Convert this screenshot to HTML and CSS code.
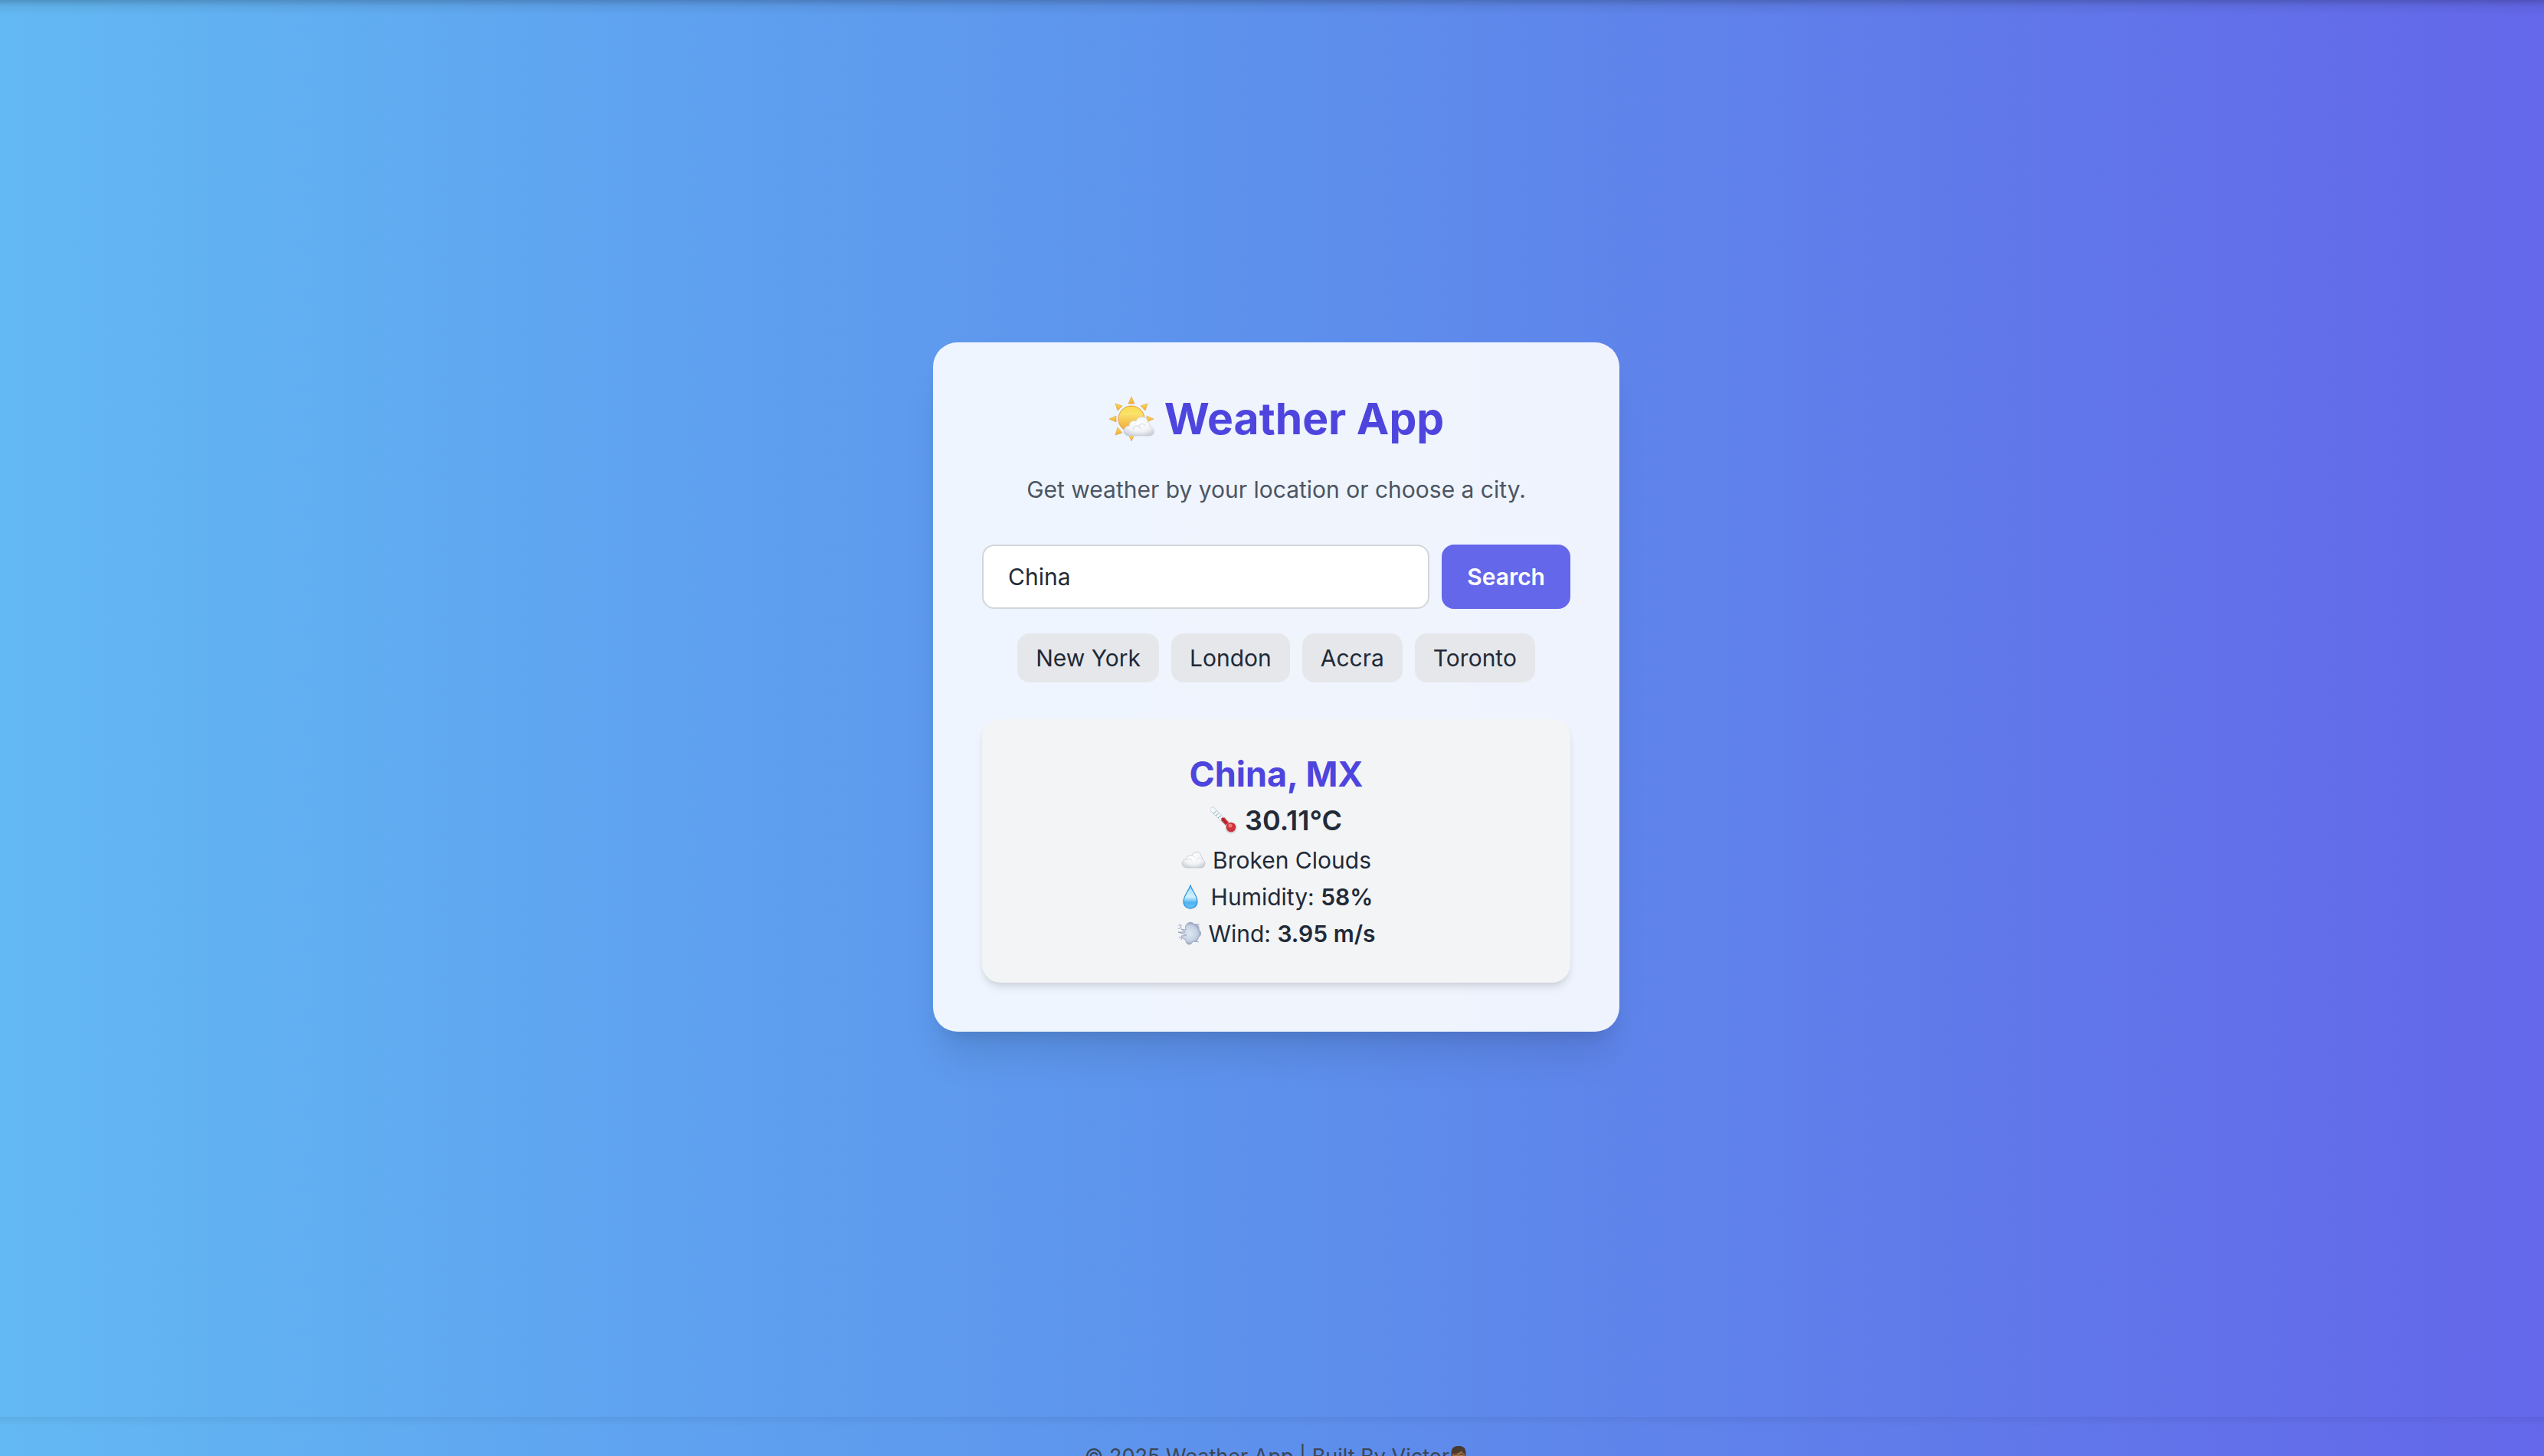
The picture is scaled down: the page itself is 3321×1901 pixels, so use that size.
FILE: index.html
```html
<!DOCTYPE html>
<html lang="en">
<head>
<meta charset="utf-8">
<meta name="viewport" content="width=device-width, initial-scale=1">
<title>Weather App</title>
<link rel="stylesheet" href="styles.css">
</head>
<body>
<main class="page">
  <section class="card">
    <h1 class="title">
      <svg class="title-icon" viewBox="0 0 60 60" aria-hidden="true">
        <defs>
          <linearGradient id="sun" x1="0" y1="0" x2="0" y2="1"><stop offset="0" stop-color="#fbd94b"/><stop offset=".3" stop-color="#fae36c"/><stop offset="1" stop-color="#f0a030"/></linearGradient>
          <linearGradient id="ray" x1="0" y1="0" x2="0" y2="1"><stop offset="0" stop-color="#f8df45"/><stop offset="1" stop-color="#f3a93c"/></linearGradient>
          <radialGradient id="puff" cx=".5" cy=".35" r=".7"><stop offset="0" stop-color="#ffffff"/><stop offset=".6" stop-color="#f1f3f6"/><stop offset="1" stop-color="#c9cfd8"/></radialGradient>
        </defs>
        <g fill="url(#ray)" stroke="#dd9a42" stroke-width=".6" stroke-linejoin="round">
          <path d="M30 1l4 9h-8z"/><path d="M51 10l-3 9-6-6z"/><path d="M59 30l-9 4v-8z"/><path d="M9 10l9 3-6 6z"/><path d="M1 30l9-4v8z"/><path d="M9 51l3-10 6 7z"/><path d="M30 59l-4-9h8z"/>
        </g>
        <circle cx="30" cy="30" r="17" fill="url(#sun)" stroke="#e49b38"/>
        <path d="M27 52c-10 0-9-13 0-13 0-6 6-8 9-6 2-8 15-8 16 2 2 1 3 3 2 5 8 2 7 12-1 12z" fill="url(#puff)" stroke="#c6ccd4" stroke-width=".7"/>
        <path d="M32 44c0-4 4-6 7-4 1-4 7-5 9-1M39 40c2 0 3 1 3 3" fill="none" stroke="#d8dce3" stroke-width="1.2"/>
      </svg>
      <span>Weather App</span>
    </h1>
    <p class="intro">Get weather by your location or choose a city.</p>
    <form class="search" onsubmit="return false">
      <input class="search-input" type="text" value="China" aria-label="City">
      <button class="search-button" type="submit">Search</button>
    </form>
    <div class="cities">
      <button class="city" type="button">New York</button>
      <button class="city" type="button">London</button>
      <button class="city" type="button">Accra</button>
      <button class="city" type="button">Toronto</button>
    </div>
    <article class="report">
      <h2 class="place">China, MX</h2>
      <p class="line temperature">
        <svg class="icon icon-large" viewBox="0 0 36 36" aria-hidden="true">
          <path d="M3 4L17 18" stroke="#c8d9df" stroke-width="7" stroke-linecap="round"/>
          <path d="M3 4L17 18" stroke="#f3fafb" stroke-width="5" stroke-linecap="round"/>
          <path d="M4 9l4-3M7 12l4-3M10 15l4-3" stroke="#919fa5" stroke-width="1"/>
          <path d="M16 16L26 27" stroke="#b9545b" stroke-width="6"/>
          <path d="M15 15L26 27" stroke="#b91c27" stroke-width="3"/>
          <circle cx="27" cy="28" r="7.5" fill="#cfdadf"/>
          <circle cx="27" cy="27" r="6.3" fill="#cf343c"/>
          <circle cx="26" cy="25" r="2.5" fill="#ef7b7b"/>
        </svg>
        <span>30.11°C</span>
      </p>
      <p class="line">
        <svg class="icon" viewBox="0 0 32 32" aria-hidden="true">
          <path d="M8 26C-1 26-1 15 7 15c0-5 5-6 7-5 2-7 12-6 12 1 2 1 2 3 1 4 6 1 5 11-1 11z" fill="url(#puff)" stroke="#c3c6ca" stroke-width=".8"/>
          <path d="M9 16c2-2 4-1 5 0M14 10c2 0 3 1 4 3M20 16c0-3 4-5 7-1" fill="none" stroke="#d9dbdf"/>
        </svg>
        <span>Broken Clouds</span>
      </p>
      <p class="line">
        <svg class="icon" viewBox="0 0 32 32" aria-hidden="true">
          <defs>
            <linearGradient id="drop" x1="0" y1="0" x2="0" y2="1"><stop offset="0" stop-color="#9bdcf8"/><stop offset=".5" stop-color="#d0f1fc"/><stop offset=".75" stop-color="#4eb1f1"/><stop offset="1" stop-color="#6bc9f5"/></linearGradient>
          </defs>
          <path d="M14 1c2 7 9 13 9 21 0 12-18 12-18 0C5 14 12 8 14 1z" fill="url(#drop)" stroke="#3593df" stroke-width="1.3"/>
        </svg>
        <span>Humidity: <strong>58%</strong></span>
      </p>
      <p class="line">
        <svg class="icon" viewBox="0 0 32 32" aria-hidden="true">
          <defs>
            <radialGradient id="gust"><stop offset="0" stop-color="#dfe8f4"/><stop offset=".7" stop-color="#c4d1e3"/><stop offset="1" stop-color="#98a6be"/></radialGradient>
          </defs>
          <path d="M12 11c-3-8 7-13 11-7 4-1 7 3 6 7 4 3 3 8-1 10 0 5-4 6-7 5-2 7-10 4-9-2-3 0-5-3-6-5l7-1-11-4 9 0-5-4z" fill="url(#gust)" stroke="#8996ad" stroke-width=".7"/>
          <path d="M2 9c3 1 4-1 4-3s-3-2-3 0M3 21c3-1 4 1 3 3M23 4h7M23 26l6 1" fill="none" stroke="#99a8bf" stroke-width="1.1"/>
        </svg>
        <span>Wind: <strong>3.95 m/s</strong></span>
      </p>
    </article>
  </section>
</main>
<footer class="footer">
  <span>© 2025 Weather App | Built By Victor</span>
  <svg class="person" viewBox="0 0 24 32" aria-hidden="true">
    <path d="M3 17C1 5 5 2 12 2s11 3 9 15z" fill="#49392f"/>
    <path d="M4 12c5 0 9-1 12-4 1 3 3 4 4 4v7c0 12-16 12-16 0z" fill="#99683f"/>
    <circle cx="3.500" cy="17" r="2" fill="#8b5b36"/><circle cx="20.500" cy="17" r="2" fill="#8b5b36"/>
    <ellipse cx="8.500" cy="16" rx="2" ry="1.500" fill="#eee"/><ellipse cx="15.500" cy="16" rx="2" ry="1.500" fill="#eee"/>
    <circle cx="8.500" cy="16" r="1.200" fill="#2c211c"/><circle cx="15.500" cy="16" r="1.200" fill="#2c211c"/>
    <path d="M6 13h4M14 13h4M9 23q3 2 6 0" stroke="#3c2a20" fill="none"/>
  </svg>
</footer>
</body>
</html>
```
FILE: styles.css
```css
* {
  box-sizing: border-box;
}

body {
  margin: 0;
  height: 100vh;
  overflow: hidden;
  color: #222a38;
  font: 30px/48px Inter, "Liberation Sans", sans-serif;
  background: linear-gradient(to right, #63b9f3, #5fa3f0 25%, #5d90ec 50%, #607bea 75%, #6467ea);
}

h1, h2, p {
  margin: 0;
}

.page {
  display: flex;
  align-items: center;
  justify-content: center;
  min-height: calc(100vh - 51px);
  padding: 0 0 56px 11px;
  background: linear-gradient(to bottom, rgba(0, 0, 0, 0.2), rgba(0, 0, 0, 0.06) 8px, transparent 20px);
}

.card {
  width: 100%;
  max-width: 896px;
  padding: 64px;
  border-radius: 32px;
  text-align: center;
  background: rgba(255, 255, 255, 0.9);
  box-shadow: 0 40px 50px -10px rgba(0, 0, 0, 0.1), 0 16px 20px -12px rgba(0, 0, 0, 0.1);
}

.title {
  display: flex;
  align-items: center;
  justify-content: center;
  gap: 13px;
  margin-bottom: 32px;
  color: #4d45dd;
  font-size: 57px;
  line-height: 72px;
  font-weight: 700;
}

.title-icon {
  width: 60px;
  height: 60px;
}

.intro {
  margin-bottom: 48px;
  color: #4c5562;
}

.search {
  display: flex;
  gap: 16px;
  margin-bottom: 32px;
}

.search-input,
.search-button,
.city {
  font: inherit;
  border-radius: 16px;
}

.search-input {
  flex: 1;
  min-width: 0;
  height: 84px;
  padding: 0 32px;
  border: 2px solid #d2d5da;
  color: inherit;
  background: #fff;
}

.search-button {
  padding: 0 33px;
  border: 0;
  color: #fff;
  font-weight: 600;
  background: #6467ea;
}

.cities {
  display: flex;
  flex-wrap: wrap;
  justify-content: center;
  gap: 16px;
  margin-bottom: 48px;
}

.city {
  padding: 8px 24px;
  border: 0;
  color: inherit;
  background: #e5e7ea;
}

.report {
  padding: 40px;
  border-radius: 24px;
  background: #f3f4f6;
  box-shadow: 0 8px 12px -2px rgba(0, 0, 0, 0.1), 0 4px 8px -4px rgba(0, 0, 0, 0.1);
}

.place {
  color: #4d45dd;
  font-size: 45px;
  line-height: 64px;
  font-weight: 700;
}

.line {
  display: flex;
  align-items: center;
  justify-content: center;
  gap: 9px;
}

.line strong {
  font-weight: 600;
}

.temperature {
  font-size: 36px;
  line-height: 56px;
  font-weight: 600;
}

.icon {
  width: 32px;
  height: 32px;
}

.icon-large {
  width: 36px;
  height: 36px;
}

.footer {
  display: flex;
  align-items: center;
  justify-content: center;
  padding: 32px 0 32px 11px;
  color: #3a4555;
  font-size: 27px;
  line-height: 40px;
  background: linear-gradient(to bottom, rgba(0, 0, 0, 0.06), transparent 12px);
}

.person {
  width: 24px;
  height: 32px;
}
```
